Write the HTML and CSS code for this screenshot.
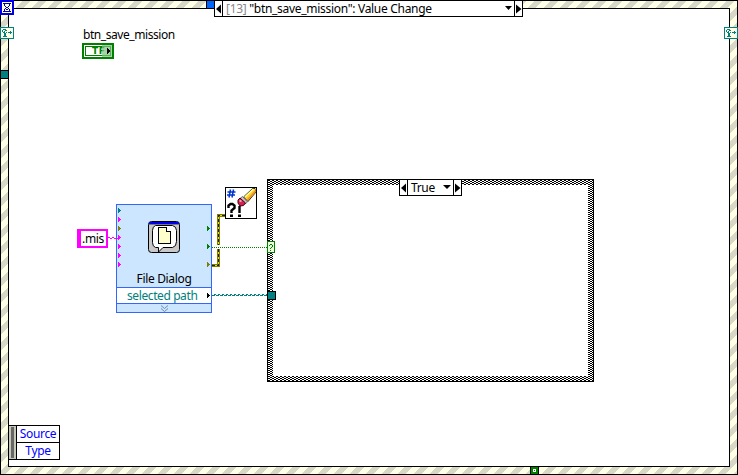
FILE: index.html
```html
<!DOCTYPE html>
<html lang="en">
<head>
<meta charset="utf-8">
<title>Block diagram</title>
<link rel="stylesheet" href="styles.css">
</head>
<body>
<main class="diagram">
  <svg class="wires" width="738" height="475" shape-rendering="crispEdges">
    <defs>
      <pattern id="stripe" width="16" height="16" patternUnits="userSpaceOnUse">
        <rect width="16" height="16" fill="#ffffe6"/>
        <path d="M7 0H15L0 15V7ZM16 7V15L15 16H7Z" fill="#d8d8c8"/>
      </pattern>
      <pattern id="checker" width="4" height="2" patternUnits="userSpaceOnUse">
        <rect width="4" height="2" fill="#fff"/>
        <path d="M0 0h2v1H0zM2 1h2v1H2z"/>
      </pattern>
      <g id="event"><rect x=".5" y=".5" width="13" height="11" fill="#ffffe6" stroke="#008080"/><path d="M3 2h3v1H3zM2 3h1v2H2zM6 3h1v1H6zM3 5h2v1H3zM4 4h1v1H4zM5 3h1v1H5zM6 5h1v1H6zM4 6h2v3H4zM3 9h4v1H3zM8 5h4v1H8zM10 4h1v3h-1z" fill="#008080"/></g>
      <path id="pin" d="M0 0h1v1h1v1h1v1h-1v1h-1v1H0z"/>
    </defs>

    <rect width="738" height="475" fill="url(#stripe)"/>
    <rect x=".5" y=".5" width="737" height="474" fill="none" stroke="#000"/>
    <rect x="8.5" y="8.5" width="721" height="458" fill="#fff" stroke="#000"/>
    <rect x="1" y="1" width="12" height="13" fill="#ffffe6" stroke="#0000e0" stroke-width="2"/>
    <path d="M3 3h8v1H3zM4 4h1v2H4zM9 4h1v2H9zM5 6h1v1H5zM8 6h1v1H8zM6 7h2v1H6zM5 8h1v1H5zM8 8h1v1H8zM4 9h1v2H4zM9 9h1v2H9zM6 9h2v1H6zM3 11h8v1H3z" fill="#0000b0"/>
    <use href="#event" y="27"/><use href="#event" x="724" y="27"/>
    <rect x=".5" y="70.5" width="8" height="8" fill="#008080" stroke="#000"/>
    <rect x="206.5" y=".5" width="8" height="8" fill="#0066ff" stroke="#000"/>
    <rect x="530.5" y="466.5" width="8" height="8" fill="#008000" stroke="#000"/>
    <path d="M533 469h3v3h-3z" fill="#fff"/><path d="M534 470h1v1h-1z" fill="#008000"/>

    <rect x="267" y="179" width="327" height="203" fill="#000"/>
    <rect x="268" y="180" width="325" height="201" fill="url(#checker)"/>
    <rect x="273" y="185" width="315" height="191" fill="#fff"/>

    <path d="M212 265.5H218.5V215.5H225" fill="none" stroke="#808000" stroke-width="3"/>
    <path d="M212 265.5H218.5V215.5H225" fill="none" stroke="#f0e000"/>
    <path d="M212 265.5H218.5V215.5H225" fill="none" stroke="#202000" stroke-dasharray="3 2"/>
    <path d="M216 245h5v4h-5z" fill="#fff"/>
    <path d="M212 247.5H267" stroke="#008000" stroke-dasharray="1 1"/>
    <path d="M212 295.5H268" stroke="#008080" stroke-dasharray="3 1"/><path d="M214 294.5H268" stroke="#008080" stroke-dasharray="2 2"/>
    <rect x="267.5" y="241.5" width="7" height="11" fill="#e6ffd8" stroke="#008000"/>
    <path d="M270 244h2v1h-2zM269 245h1v1h-1zM272 245h1v2h-1zM271 247h1v1h-1zM270 248h1v1h-1zM270 250h1v1h-1z" fill="#008000"/>
    <rect x="267.5" y="291.5" width="8" height="8" fill="#008080" stroke="#000"/>
  </svg>

  <div class="selector event-case">
    <span class="step"><svg width="7" height="15"><path d="M6 3.500v9L1 8z"/></svg></span>
    <span class="caption"><span><i>[13]</i> "btn_save_mission": Value Change</span><svg width="7" height="4"><path d="M0 0h7L3.500 4z"/></svg></span>
    <span class="step"><svg width="7" height="15"><path d="M1 3.500v9L6.500 8z"/></svg></span>
  </div>

  <div class="button-node">
    <span class="label">btn_save_mission</span>
    <span class="bool"><b>TF</b><svg width="10" height="12"><path d="M0 0h10v12H0z" fill="#80c080" fill-opacity=".7"/><path d="M5 3h1v1h1v1h1v2H7v1H6v1H5z" shape-rendering="crispEdges"/></svg></span>
  </div>

  <div class="constant">.mis</div>

  <section class="express">
    <div class="body">
      <svg class="dialog-icon" width="32" height="32">
        <rect x=".5" y=".5" width="31" height="31" rx="3" fill="#c8c8c8" stroke="#000"/>
        <path d="M2 1h28l1 1.500V3H1v-.5z" fill="#0000f0"/><path d="M1 3.500h30" stroke="#000040" stroke-opacity=".4"/>
        <path d="M7.500 4.500h17q4 1 4 5v11q0 5-4 6H15l-4.500 4.500v-4.500h-3q-3-1-3-5v-12q0-4 3-5z" fill="#fff" stroke="#000"/>
        <path d="M10.500 6.500h8l4 4v12h-12z" fill="#ffffcc" stroke="#000" shape-rendering="crispEdges"/><path d="M18.500 6.500v4h4" fill="#fff" stroke="#000" shape-rendering="crispEdges"/>
      </svg>
      <span class="name">File Dialog</span>
    </div>
    <div class="output">selected path</div>
    <div class="expand"><svg width="9" height="8"><path d="M1 .5l3.500 3L8 .5M1 3.500l3.500 3 3.500-3" fill="none" stroke="#708cb0"/></svg></div>
  </section>

  <svg class="clear-error" width="32" height="32">
    <path d="M.5.5h31v31H.5z" fill="#fff" stroke="#000" shape-rendering="crispEdges"/>
    <path d="M5.500 2.500L4 10.500M8.500 2.500L7 10.500M2.500 5h8M2 8h8" stroke="#0033cc" stroke-width="1.500"/>
    <path d="M18.500 10l9-8.500H30l1 1V5l-8 9.500z" fill="#ffd028" stroke="#000" stroke-width=".8"/>
    <path d="M20 10l8.500-8" stroke="#ffffa0" stroke-width="1.500"/><path d="M22.500 13L30.500 4" stroke="#f09020" stroke-width="1.600"/>
    <path d="M17.500 9.500l5 5.500-2.500 2-5-5.500z" fill="#c8c8c8" stroke="#444" stroke-width=".7"/>
    <path d="M15 11l5.500 5-2 2.500-3.500.5-2-3v-3z" fill="#d82050" stroke="#400010"/><path d="M14.500 13.500l2 1" stroke="#ffb0c0" stroke-width="1.500"/>
    <path d="M3.500 21v-2.500l2-1.500h2l2 1.500V21l-3 2.500v2.500M14.500 19v7" fill="none" stroke="#000" stroke-width="2.400"/><path d="M5 27.500h3v2.500H5zM13 27.500h3v2.500h-3z"/>
  </svg>

  <svg class="pins" width="738" height="475" shape-rendering="crispEdges">
    <path d="M108 237.500h2M110 238.500h2M112 237.500h2M114 238.500h4" fill="none" stroke="#f0f"/>
    <use href="#pin" x="118" y="208" fill="#008080"/><use href="#pin" x="118" y="217" fill="#f0f"/><use href="#pin" x="118" y="226" fill="#808000"/><use href="#pin" x="118" y="235" fill="#f0f"/><use href="#pin" x="118" y="244" fill="#f0f"/><use href="#pin" x="118" y="253" fill="#f0f"/><use href="#pin" x="118" y="262" fill="#f0f"/>
    <use href="#pin" x="207" y="226" fill="#008000"/><use href="#pin" x="207" y="244" fill="#008000"/><use href="#pin" x="207" y="262" fill="#808000"/><use href="#pin" x="207" y="293"/>
  </svg>

  <div class="selector true-case">
    <span class="step"><svg width="7" height="15"><path d="M6 3.500v9L1 8z"/></svg></span>
    <span class="caption"><span>True</span><svg width="8" height="4"><path d="M0 0h8L4 4z"/></svg></span>
    <span class="step"><svg width="7" height="15"><path d="M1 3.500v9L6.500 8z"/></svg></span>
  </div>

  <div class="event-data"><span class="grip"></span><div class="fields"><span>Source</span><span>Type</span></div></div>
</main>
</body>
</html>
```
FILE: styles.css
```css
* { box-sizing: border-box; }
body { margin: 0; background: #fff; overflow: hidden; }
svg { display: block; flex: none; }
.diagram { position: relative; width: 738px; height: 475px; font: 12px/16px "Noto Sans", "Open Sans", sans-serif; letter-spacing: -.33px; color: #000; white-space: nowrap; }
.wires, .pins { position: absolute; left: 0; top: 0; }
.selector { position: absolute; display: flex; height: 17px; border: 1px solid #000; background: #fff; line-height: 16px; }
.event-case { left: 214px; top: 0; width: 309px; }
.true-case { left: 399px; top: 179px; width: 63px; }
.step { width: 7px; flex: none; }
.caption { flex: 1; display: flex; justify-content: space-between; align-items: center; padding: 1px 2px 0 3px; border: solid #000; border-width: 0 1px; }
.event-case .caption { letter-spacing: -.3px; }
.caption svg { margin-top: -2px; }
.caption i { font-style: normal; color: #888; }
.button-node { position: absolute; left: 82px; top: 27px; display: flex; flex-direction: column; align-items: flex-start; }
.button-node .label { padding-left: 1px; letter-spacing: -.43px; }
.bool { display: flex; align-items: center; width: 32px; height: 16px; padding-left: 8px; border: 2px solid #008000; box-shadow: inset 0 0 0 1px #fff, inset 0 0 0 2px #008000; }
.bool b { width: 12px; font: bold 9px/12px "DejaVu Sans", sans-serif; letter-spacing: .5px; color: #008000; }
.bool svg { position: relative; margin-left: -2px; }
.constant { position: absolute; left: 77px; top: 229px; width: 31px; height: 19px; border: 2px solid #f0f; border-left-width: 4px; background: #fff; padding-left: 1px; line-height: 16px; }
.express { position: absolute; left: 116px; top: 204px; width: 96px; height: 109px; border: 1px solid #36f; background: #cce6ff; display: flex; flex-direction: column; }
.express .body { height: 82px; display: flex; flex-direction: column; align-items: center; padding-top: 16px; }
.express .name { margin-top: 18px; }
.output { height: 17px; border: solid #36f; border-width: 1px 0; background: #fff; color: #008080; padding-left: 10px; line-height: 16px; letter-spacing: -.4px; }
.expand { flex: 1; display: flex; justify-content: center; padding-top: 1px; }
.clear-error { position: absolute; left: 225px; top: 187px; }
.event-data { position: absolute; left: 8px; top: 425px; width: 52px; height: 35px; border: 1px solid #000; display: flex; background: #fff; }
.grip { width: 7px; border: solid #c8c8b8; border-width: 1px 2px; background: #666; }
.fields { flex: 1; display: flex; flex-direction: column; text-align: center; border-left: 1px solid #000; color: #00f; line-height: 16px; }
.fields span { flex: 1; }
.fields span + span { border-top: 1px solid #000; }
```
